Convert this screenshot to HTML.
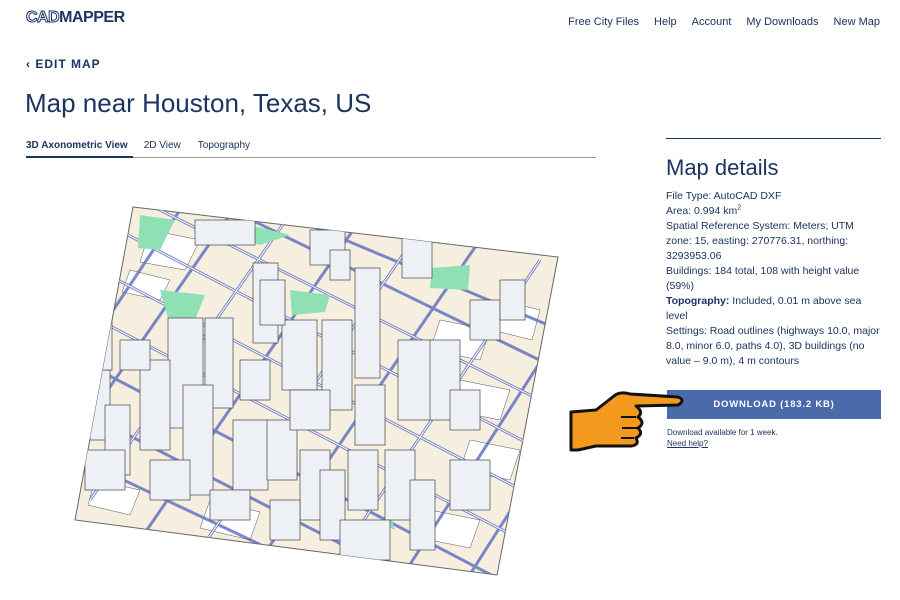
<!DOCTYPE html>
<html><head><meta charset="utf-8"><style>
body{margin:0;width:900px;height:600px;background:#fff;font-family:"Liberation Sans",sans-serif;color:#1d3461;position:relative;overflow:hidden}
.abs{position:absolute}
.nav a{color:#1d3461;text-decoration:none;font-size:11px;margin-left:15px}
</style></head><body>
<div class="abs" style="left:26px;top:9px;font-size:16px;font-weight:900;letter-spacing:-0.5px;color:#1d3461"><span style="color:#fff;-webkit-text-stroke:1px #1d3461">CAD</span>MAPPER</div>
<div class="abs nav" style="right:20px;top:12px"><a>Free City Files</a><a>Help</a><a>Account</a><a>My Downloads</a><a>New Map</a></div>
<div class="abs" style="left:26px;top:57px;font-size:12px;font-weight:bold;letter-spacing:1px">‹ EDIT MAP</div>
<div class="abs" style="left:25px;top:88px;font-size:26px;">Map near Houston, Texas, US</div>
<div class="abs" style="left:26px;top:140px;font-size:10px"><b>3D Axonometric View</b><span style="margin-left:16px">2D View</span><span style="margin-left:17px">Topography</span></div>
<div class="abs" style="left:26px;top:157px;width:570px;height:1px;background:#999"></div>
<div class="abs" style="left:26px;top:156px;width:107px;height:2px;background:#1d3461"></div>
<div class="abs" style="left:666px;top:138px;width:215px;height:1px;background:#1d3461"></div>
<div class="abs" style="left:666px;top:155px;font-size:22px">Map details</div>
<div class="abs" style="left:666px;top:189px;width:214px;font-size:10.5px;line-height:15px">File Type: AutoCAD DXF<br>Area: 0.994 km<sup style="font-size:7px;line-height:0">2</sup><br>Spatial Reference System: Meters; UTM zone: 15, easting: 270776.31, northing: 3293953.06<br>Buildings: 184 total, 108 with height value (59%)<br><b>Topography:</b> Included, 0.01 m above sea level<br>Settings: Road outlines (highways 10.0, major 8.0, minor 6.0, paths 4.0), 3D buildings (no value – 9.0 m), 4 m contours</div>
<div class="abs" style="left:667px;top:390px;width:214px;height:29px;background:#4a6aaa;color:#fff;font-size:9.5px;font-weight:bold;letter-spacing:.8px;text-align:center;line-height:29px">DOWNLOAD (183.2 KB)</div>
<div class="abs" style="left:667px;top:427px;font-size:8px;line-height:11px">Download available for 1 week.<br><u>Need help?</u></div>
<svg class="abs" style="left:566px;top:390px" width="120" height="62" viewBox="0 0 120 62"><path d="M5 22 L30 20 L48 6 Q54 1 64 4 L112 7 Q120 10 112 15 L70 16 Q78 22 72 27 Q80 33 72 38 Q78 44 70 48 Q74 55 65 56 L30 56 L12 60 L5 60 Z" fill="#f39a1e" stroke="#111" stroke-width="3" stroke-linejoin="round"/><path d="M70 27 L55 27 M72 38 L56 38 M68 48 L55 48" stroke="#111" stroke-width="2"/></svg>
<svg class="abs" style="left:0;top:0" width="600" height="600">
<defs><clipPath id="c"><polygon points="133,207 558,257 497,575 75,520"/></clipPath></defs>
<polygon points="133,207 558,257 497,575 75,520" fill="#f6efdf" stroke="#666" stroke-width="1"/>
<g clip-path="url(#c)">
<g fill="#fff" stroke="#555" stroke-width=".5"><polygon points="150,230 200,240 185,270 140,262"/><polygon points="440,320 490,330 480,360 430,350"/><polygon points="460,380 510,390 500,420 450,410"/><polygon points="470,440 520,450 510,480 460,470"/><polygon points="95,480 140,490 130,515 88,505"/><polygon points="210,500 260,512 250,540 200,528"/><polygon points="130,270 170,280 160,300 122,292"/><polygon points="500,300 540,310 532,340 492,330"/><polygon points="430,510 480,520 470,548 420,538"/></g>
<g stroke="#5a6bc0" stroke-width="3" fill="none" opacity=".8">
<path d="M60,300 L560,560 M60,250 L560,510 M80,210 L560,460 M140,200 L560,410 M200,195 L560,370 M250,200 L560,330 M60,350 L520,590 M60,400 L470,610 M60,450 L420,620"/>
<path d="M90,500 L300,200 M140,540 L360,220 M200,550 L420,230 M260,560 L480,240 M330,570 L540,260 M400,580 L580,300 M460,590 L600,370 M80,430 L240,200 M80,360 L180,210"/>
</g>
<g stroke="#fff" stroke-width="1" fill="none"><path d="M60,300 L560,560 M60,250 L560,510 M80,210 L560,460 M140,200 L560,410 M90,500 L300,200 M200,550 L420,230 M330,570 L540,260"/></g>
<g fill="#8fe0b5"><polygon points="140,215 175,220 160,250 138,248"/><polygon points="230,220 290,235 260,245 225,232"/><polygon points="160,290 205,295 195,320 170,325"/><polygon points="290,290 330,295 325,312 292,315"/><polygon points="432,268 470,265 468,290 430,288"/><polygon points="310,240 320,235 330,250"/><polygon points="377,522 392,520 395,530"/></g>
<g fill="#edf1f6" stroke="#444" stroke-width=".7">
<rect x="402" y="218" width="30" height="60"/><rect x="168" y="318" width="35" height="110"/><rect x="205" y="318" width="28" height="90"/><rect x="140" y="360" width="30" height="90"/><rect x="183" y="385" width="30" height="110"/><rect x="253" y="263" width="25" height="80"/><rect x="355" y="268" width="25" height="110"/><rect x="282" y="320" width="35" height="70"/><rect x="322" y="320" width="30" height="90"/><rect x="398" y="340" width="35" height="80"/><rect x="430" y="340" width="30" height="80"/><rect x="355" y="385" width="30" height="60"/><rect x="233" y="420" width="35" height="70"/><rect x="267" y="420" width="30" height="60"/><rect x="300" y="450" width="30" height="70"/><rect x="320" y="470" width="25" height="70"/><rect x="348" y="450" width="30" height="60"/><rect x="385" y="450" width="30" height="70"/><rect x="410" y="480" width="25" height="70"/><rect x="90" y="370" width="20" height="70"/><rect x="100" y="310" width="12" height="60"/><rect x="120" y="340" width="30" height="30"/><rect x="105" y="405" width="25" height="70"/><rect x="85" y="450" width="40" height="40"/><rect x="195" y="220" width="60" height="25"/><rect x="310" y="230" width="35" height="35"/><rect x="240" y="360" width="30" height="40"/><rect x="290" y="390" width="40" height="40"/><rect x="450" y="460" width="40" height="50"/><rect x="470" y="300" width="30" height="40"/><rect x="150" y="460" width="40" height="40"/><rect x="210" y="490" width="40" height="30"/><rect x="270" y="500" width="30" height="40"/><rect x="340" y="520" width="50" height="40"/><rect x="260" y="280" width="25" height="45"/><rect x="330" y="250" width="20" height="30"/><rect x="450" y="390" width="30" height="40"/><rect x="500" y="280" width="25" height="40"/></g>
</g>
</svg>
</body></html>
